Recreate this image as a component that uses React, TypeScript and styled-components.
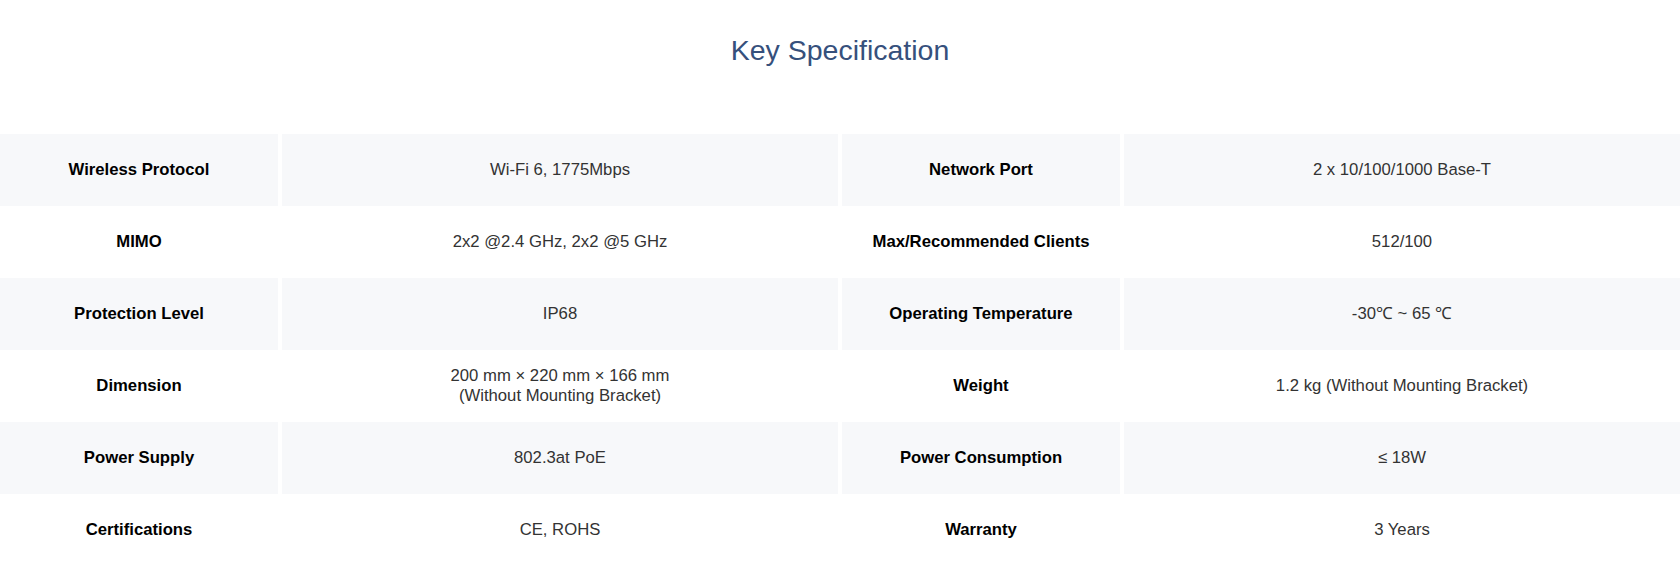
import React from "react";
import styled, { createGlobalStyle } from "styled-components";

const GlobalStyle = createGlobalStyle`
  html, body {
    margin: 0;
    padding: 0;
    background: #fff;
    font-family: "Liberation Sans", Arial, sans-serif;
  }
`;

const Section = styled.section`
  width: 1680px;
  padding-top: 33px;
`;

const Title = styled.h2`
  margin: 0 0 67px;
  text-align: center;
  font-size: 28.5px;
  font-weight: 400;
  line-height: 34px;
  color: #36507c;
`;

const SpecGrid = styled.div`
  display: grid;
  grid-template-columns: 1fr 2fr 1fr 2fr;
  column-gap: 4px;
`;

const Cell = styled.div<{ $shaded: boolean; $label?: boolean }>`
  height: 72px;
  display: flex;
  align-items: center;
  justify-content: center;
  text-align: center;
  background: ${(p) => (p.$shaded ? "#f7f8fa" : "#fff")};
  font-size: 16.7px;
  font-weight: ${(p) => (p.$label ? 700 : 400)};
  color: ${(p) => (p.$label ? "#000" : "#333")};
  line-height: 20px;
`;

const specs: [string, React.ReactNode, string, React.ReactNode][] = [
  ["Wireless Protocol", "Wi-Fi 6, 1775Mbps", "Network Port", "2 x 10/100/1000 Base-T"],
  ["MIMO", "2x2 @2.4 GHz, 2x2 @5 GHz", "Max/Recommended Clients", "512/100"],
  ["Protection Level", "IP68", "Operating Temperature", "-30℃ ~ 65 ℃"],
  [
    "Dimension",
    <>
      200 mm × 220 mm × 166 mm
      <br />
      (Without Mounting Bracket)
    </>,
    "Weight",
    "1.2 kg (Without Mounting Bracket)",
  ],
  ["Power Supply", "802.3at PoE", "Power Consumption", "≤ 18W"],
  ["Certifications", "CE, ROHS", "Warranty", "3 Years"],
];

const App: React.FC = () => {
  return (
    <>
      <GlobalStyle />
      <Section>
        <Title>Key Specification</Title>
        <SpecGrid>
          {specs.map((row, i) => {
            const shaded = i % 2 === 0;
            return (
              <React.Fragment key={i}>
                <Cell $shaded={shaded} $label>{row[0]}</Cell>
                <Cell $shaded={shaded}>{row[1]}</Cell>
                <Cell $shaded={shaded} $label>{row[2]}</Cell>
                <Cell $shaded={shaded}>{row[3]}</Cell>
              </React.Fragment>
            );
          })}
        </SpecGrid>
      </Section>
    </>
  );
};

export default App;
